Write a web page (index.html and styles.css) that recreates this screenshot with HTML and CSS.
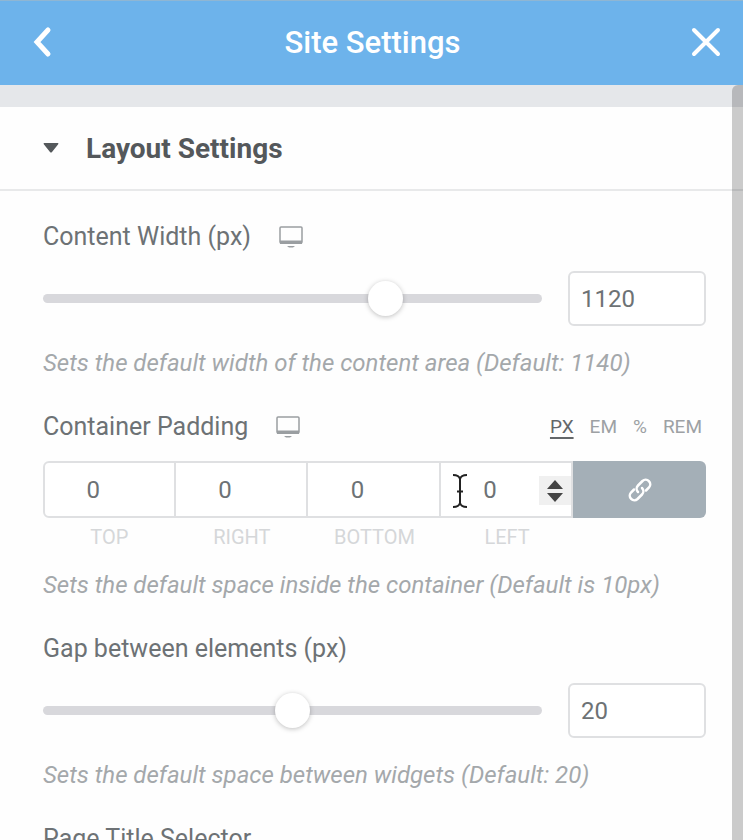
FILE: index.html
```
<!DOCTYPE html>
<html lang="en">
<head>
    <meta charset="UTF-8">
    <meta name="viewport" content="width=device-width, initial-scale=1">
    <title>Site Settings</title>
    <link rel="stylesheet" href="styles.css">
</head>
<body>
    <div class="panel">
        <header class="panel-header">
            <button type="button" class="header-button" aria-label="Back">
                <svg width="24" height="34" viewBox="0 0 24 34"><path d="M18 4L7 16l11 12" fill="none" stroke="currentColor" stroke-width="5" stroke-linecap="round"/></svg>
            </button>
            <h1>Site Settings</h1>
            <button type="button" class="header-button" aria-label="Close">
                <svg width="30" height="32" viewBox="0 0 30 32"><path d="M3 3l24 24M27 3L3 27" fill="none" stroke="currentColor" stroke-width="4" stroke-linecap="round"/></svg>
            </button>
        </header>

        <main class="panel-content">
            <div class="strip"></div>
            <button type="button" class="section-toggle" aria-expanded="true">
                <svg width="16" height="10" viewBox="0 0 16 10"><path d="M1 0h14q1 0.500 0 1.500L9 9q-1 1-2 0L1 1.500Q0 0.500 1 0z" fill="currentColor"/></svg>
                Layout Settings
            </button>

            <div class="controls">
                <div class="control">
                    <div class="control-title">
                        <label for="content-width">Content Width (px)</label>
                        <svg class="device-icon" width="24" height="22" viewBox="0 0 24 22"><rect x="1" y="1" width="22" height="16" rx="1" fill="none" stroke="currentColor" stroke-width="1.500"/><path d="M1 14.500h22v3.500H1zM8 20h8l-2 1.500h-4z" fill="currentColor"/></svg>
                    </div>
                    <div class="slider-row">
                        <input type="range" class="slider" min="0" max="1600" value="1120" aria-label="Content width slider">
                        <input type="number" class="number-box" id="content-width" value="1120">
                    </div>
                    <p class="description">Sets the default width of the content area (Default: 1140)</p>
                </div>

                <div class="control">
                    <div class="control-title">
                        <span>Container Padding</span>
                        <svg class="device-icon" width="24" height="22" viewBox="0 0 24 22"><rect x="1" y="1" width="22" height="16" rx="1" fill="none" stroke="currentColor" stroke-width="1.500"/><path d="M1 14.500h22v3.500H1zM8 20h8l-2 1.500h-4z" fill="currentColor"/></svg>
                        <div class="units">
                            <button type="button" class="active">PX</button>
                            <button type="button">EM</button>
                            <button type="button">%</button>
                            <button type="button">REM</button>
                        </div>
                    </div>
                    <div class="dimensions">
                        <div class="dimension">
                            <input type="number" id="padding-top" value="0">
                            <label for="padding-top">TOP</label>
                        </div>
                        <div class="dimension">
                            <input type="number" id="padding-right" value="0">
                            <label for="padding-right">RIGHT</label>
                        </div>
                        <div class="dimension">
                            <input type="number" id="padding-bottom" value="0">
                            <label for="padding-bottom">BOTTOM</label>
                        </div>
                        <div class="dimension">
                            <input type="number" id="padding-left" value="0">
                            <label for="padding-left">LEFT</label>
                            <svg class="text-cursor" width="18" height="36" viewBox="0 0 18 36"><path d="M2 2q6 0 7 4q1-4 7-4M9 5v26M2 34q6 0 7-4q1 4 7 4M6 18.500h6" fill="none" stroke="#222" stroke-width="2"/></svg>
                            <span class="spinner">
                                <svg width="16" height="22" viewBox="0 0 16 22"><path d="M8 0l8 9H0zM0 13h16l-8 9z" fill="#444"/></svg>
                            </span>
                        </div>
                        <button type="button" class="link-button" aria-label="Link values">
                            <svg width="24" height="24" viewBox="0 0 24 24"><g fill="none" stroke="currentColor" stroke-width="2.500" stroke-linecap="round"><path d="M10 14a4.600 4.600 0 0 1 0-6.500l4.500-4.500a4.600 4.600 0 0 1 6.500 6.500l-3 3"/><path d="M14 10a4.600 4.600 0 0 1 0 6.500l-4.500 4.500a4.600 4.600 0 0 1-6.500-6.500l3-3"/></g></svg>
                        </button>
                    </div>
                    <p class="description">Sets the default space inside the container (Default is 10px)</p>
                </div>

                <div class="control">
                    <div class="control-title">
                        <label for="elements-gap">Gap between elements (px)</label>
                    </div>
                    <div class="slider-row">
                        <input type="range" class="slider" min="0" max="40" value="20" aria-label="Gap slider">
                        <input type="number" class="number-box" id="elements-gap" value="20">
                    </div>
                    <p class="description">Sets the default space between widgets (Default: 20)</p>
                </div>

                <div class="control">
                    <div class="control-title">
                        <label for="title-selector">Page Title Selector</label>
                    </div>
                    <input type="text" class="text-box" id="title-selector">
                </div>
            </div>

            <div class="scrollbar"></div>
        </main>
    </div>
</body>
</html>
```
FILE: styles.css
```
* {
    box-sizing: border-box;
}

body {
    margin: 0;
    font-family: Roboto, Arial, sans-serif;
    font-size: 24px;
    line-height: 28px;
    color: #6d7275;
    background-color: #fefefe;
}

button,
input {
    font-family: inherit;
    color: inherit;
}

button {
    padding: 0;
    border: none;
    background: none;
    cursor: pointer;
}

svg {
    display: block;
    flex-shrink: 0;
}

.panel {
    display: flex;
    flex-direction: column;
    height: 100vh;
    overflow: hidden;
}

.panel-header {
    display: flex;
    align-items: center;
    flex-shrink: 0;
    height: 85px;
    padding: 0 22px 0 30px;
    border-top: 1px solid #8fb6d3;
    background-color: #6db3eb;
    color: #fff;
}

.panel-header h1 {
    flex: 1;
    margin: 0;
    font-size: 31px;
    font-weight: 500;
    text-align: center;
}

.panel-content {
    position: relative;
    flex: 1;
    min-height: 0;
    overflow: hidden;
}

.strip {
    height: 22px;
    background-color: #e5e7ea;
}

.section-toggle {
    display: flex;
    align-items: center;
    gap: 27px;
    width: 100%;
    height: 84px;
    padding: 0 43px;
    border-bottom: 2px solid #e8e9ea;
    font-size: 28px;
    font-weight: 700;
    color: #54585b;
}

.controls {
    display: flex;
    flex-direction: column;
    gap: 36px;
    padding: 32px 37px 32px 43px;
}

.control-title {
    display: flex;
    align-items: center;
    gap: 28px;
    margin-bottom: 20px;
    font-size: 25px;
}

.device-icon {
    color: #9a9ea1;
}

.slider-row {
    display: flex;
    align-items: center;
    gap: 26px;
}

.slider {
    flex: 1;
    min-width: 0;
    height: 36px;
    margin: 0;
    appearance: none;
    background: none;
}

.slider::-webkit-slider-runnable-track {
    height: 9px;
    border-radius: 5px;
    background-color: #d8d8dc;
}

.slider::-webkit-slider-thumb {
    appearance: none;
    width: 35px;
    height: 35px;
    margin-top: -13px;
    border-radius: 50%;
    background-color: #fff;
    box-shadow: 0 1px 5px rgba(0, 0, 0, 0.25);
}

input[type="number"] {
    appearance: textfield;
}

input[type="number"]::-webkit-inner-spin-button {
    display: none;
}

.number-box,
.text-box {
    width: 138px;
    height: 55px;
    padding: 0 11px;
    border: 2px solid #dfe0e2;
    border-radius: 6px;
    background-color: #fff;
    font-size: 24px;
}

.text-box {
    width: 100%;
}

.description {
    margin: 23px 0 0;
    font-style: italic;
    color: #a4a8ab;
}

.units {
    display: flex;
    gap: 8px;
    margin-left: auto;
}

.units button {
    padding: 0 4px;
    font-size: 19px;
    line-height: 28px;
    color: #9da1a4;
}

.units .active {
    color: #63676a;
    text-decoration: underline;
    text-decoration-thickness: 2px;
    text-underline-offset: 4px;
}

.dimensions {
    display: flex;
    align-items: flex-start;
}

.dimension {
    position: relative;
    flex: 1;
    min-width: 0;
    text-align: center;
}

.dimension input {
    display: block;
    width: 100%;
    height: 57px;
    padding: 0 32px 0 0;
    border: 2px solid #dfe0e2;
    border-left-width: 0;
    background-color: #fff;
    font-size: 24px;
    text-align: center;
}

.dimension:first-child input {
    border-left-width: 2px;
    border-radius: 6px 0 0 6px;
}

.dimension label {
    display: block;
    margin-top: 8px;
    font-size: 20px;
    line-height: 22px;
    color: #d5d7d9;
}

.text-cursor {
    position: absolute;
    top: 12px;
    left: 10px;
}

.spinner {
    position: absolute;
    top: 15px;
    right: 2px;
    display: flex;
    align-items: center;
    justify-content: center;
    width: 32px;
    height: 29px;
    background-color: #f0f0f0;
}

.link-button {
    display: flex;
    flex: 1;
    align-items: center;
    justify-content: center;
    height: 57px;
    border-radius: 0 6px 6px 0;
    background-color: #a4afb7;
    color: #fff;
}

/* sits over the content, below the header */
.scrollbar {
    position: absolute;
    top: 0;
    right: 0;
    bottom: 0;
    width: 11px;
    border-radius: 6px 0 0 0;
    background-color: rgba(0, 0, 0, 0.2);
}
```
